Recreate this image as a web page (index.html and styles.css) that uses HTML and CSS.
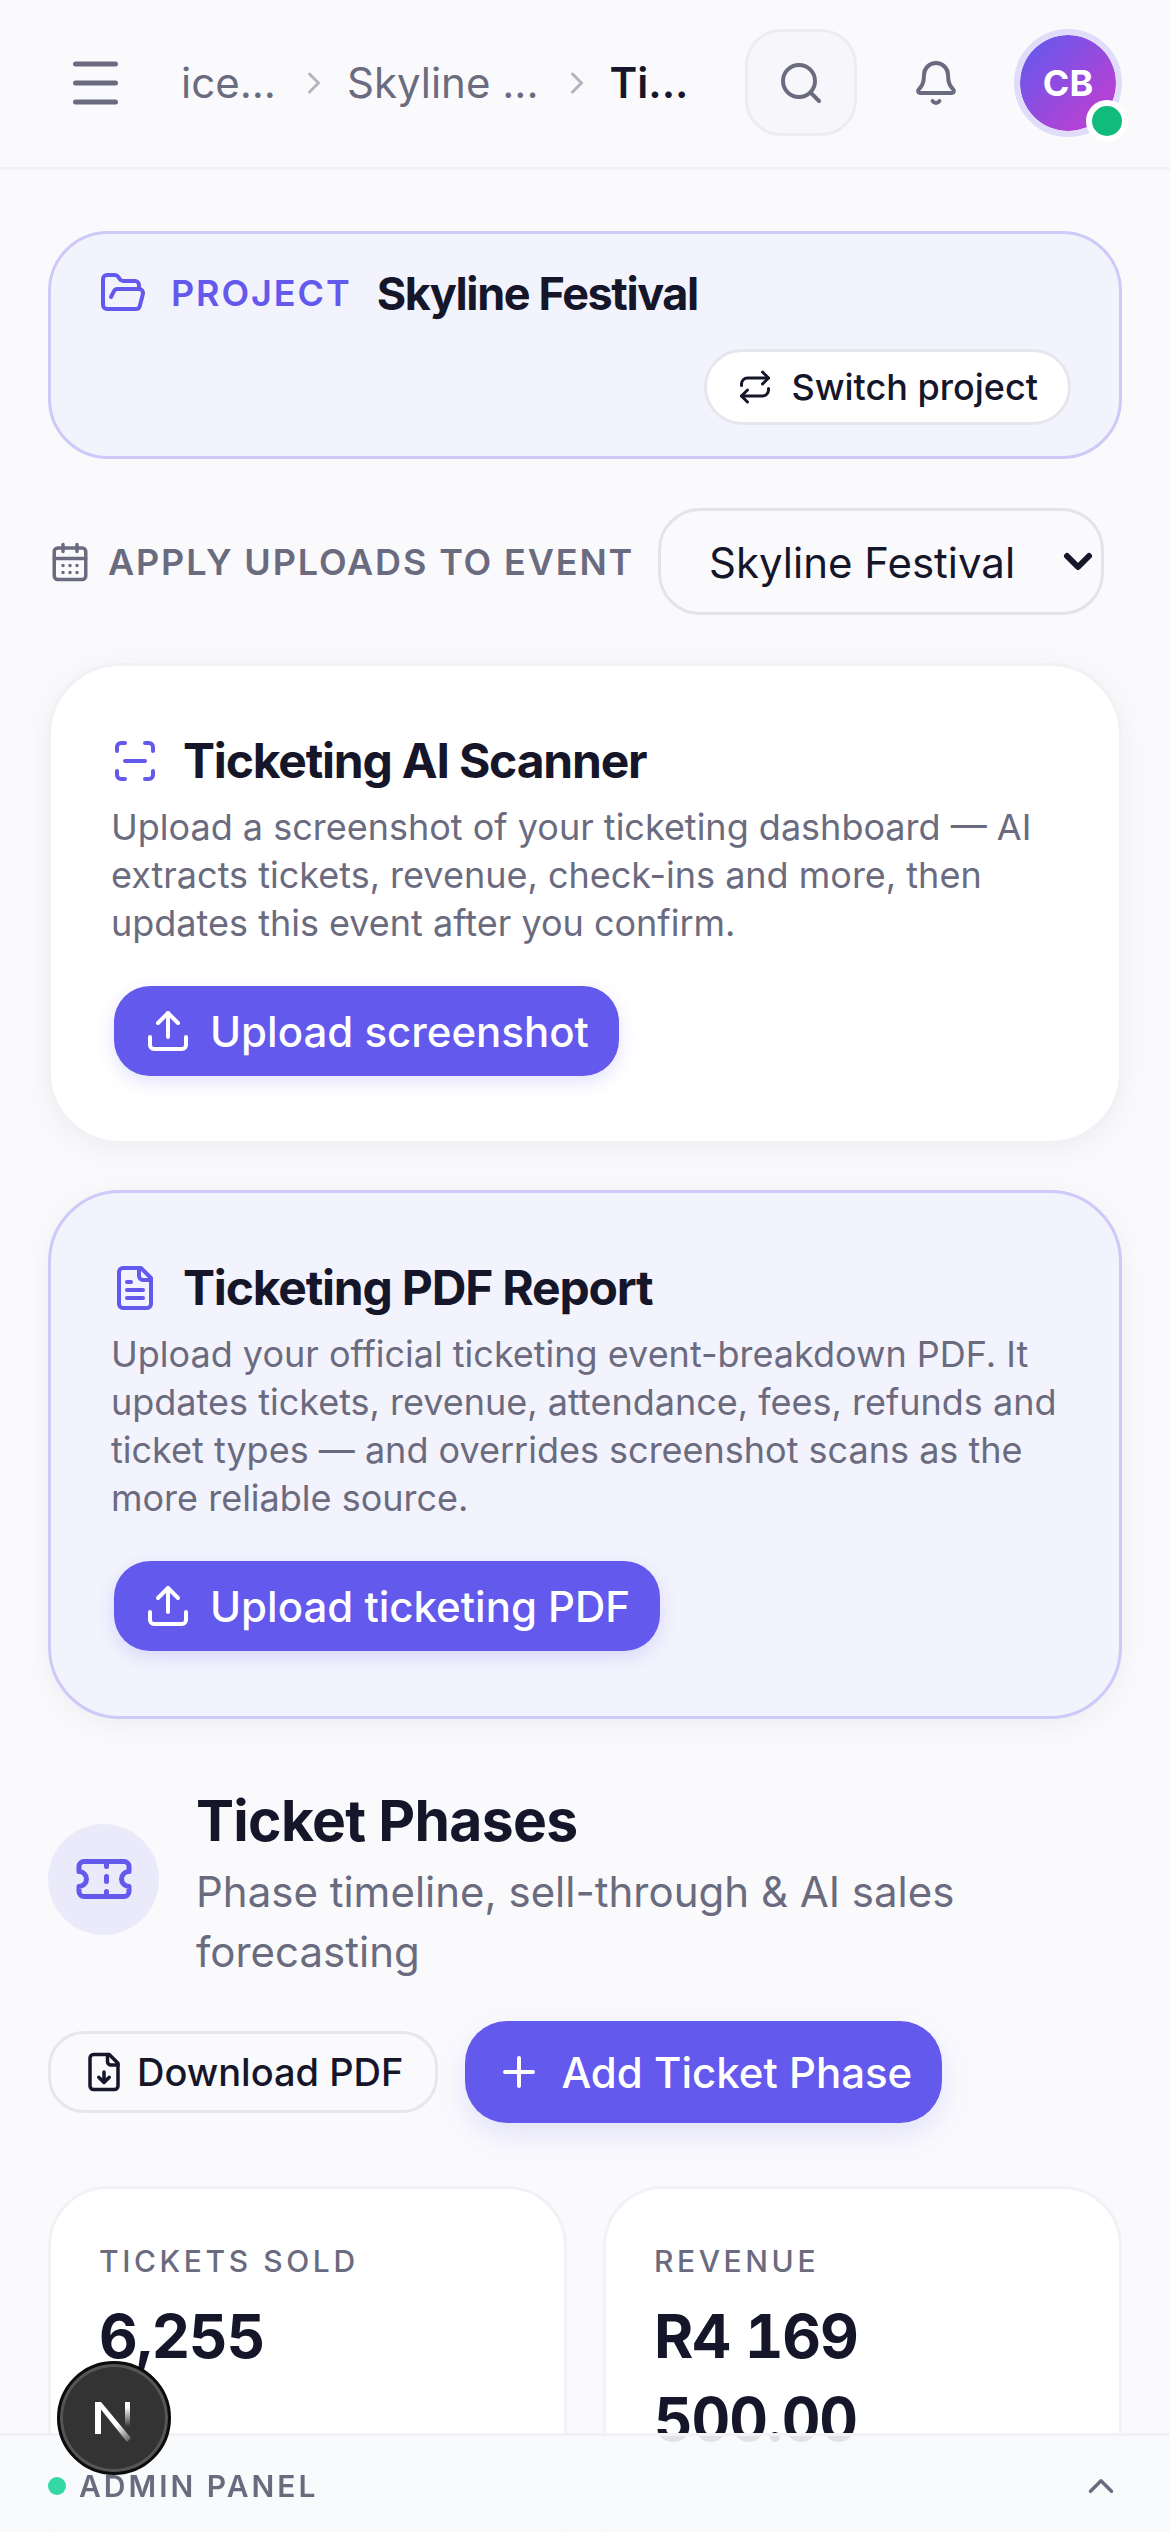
FILE: index.html
```html
<!DOCTYPE html>
<html lang="en">
<head>
    <meta charset="UTF-8">
    <meta name="viewport" content="width=device-width, initial-scale=1.0">
    <title>Ticket Phases</title>
    <link rel="stylesheet" href="styles.css">
</head>
<body>
    <header class="topbar">
        <button class="menu-btn" aria-label="Menu">
            <svg width="60" height="60" viewBox="0 0 60 60" fill="none" stroke="#6b6b80" stroke-width="5" stroke-linecap="round"><path d="M12.500 11h40M12.500 30h40M12.500 49h40"/></svg>
        </button>
        <nav class="crumbs">
            <span class="crumb">ice...</span>
            <svg class="crumb-sep" viewBox="0 0 24 24" fill="none" stroke="#b4b4c0" stroke-width="2" stroke-linecap="round" stroke-linejoin="round"><path d="m9 18 6-6-6-6"/></svg>
            <span class="crumb">Skyline ...</span>
            <svg class="crumb-sep" viewBox="0 0 24 24" fill="none" stroke="#b4b4c0" stroke-width="2" stroke-linecap="round" stroke-linejoin="round"><path d="m9 18 6-6-6-6"/></svg>
            <span class="crumb crumb-current">Ti...</span>
        </nav>
        <button class="search-btn" aria-label="Search">
            <svg width="48" height="48" viewBox="0 0 24 24" fill="none" stroke="#6b6b80" stroke-width="2" stroke-linecap="round" stroke-linejoin="round"><circle cx="11" cy="11" r="8"/><path d="m21 21-4.3-4.3"/></svg>
        </button>
        <button class="bell-btn" aria-label="Notifications">
            <svg width="48" height="48" viewBox="0 0 24 24" fill="none" stroke="#6b6b80" stroke-width="2" stroke-linecap="round" stroke-linejoin="round"><path d="M10.3 21a2 2 0 0 0 3.4 0"/><path d="M3.3 15.3A1 1 0 0 0 4 17h16a1 1 0 0 0 .7-1.7C19.4 14 18 12.500 18 8A6 6 0 0 0 6 8c0 4.500-1.400 6-2.700 7.300"/></svg>
        </button>
        <div class="avatar">
            <span>CB</span>
            <i class="avatar-dot"></i>
        </div>
    </header>

    <main class="page">
        <section class="project-card">
            <div class="project-row">
                <svg width="48" height="48" viewBox="0 0 24 24" fill="none" stroke="#6359ed" stroke-width="2" stroke-linecap="round" stroke-linejoin="round"><path d="m6 14 1.500-2.900A2 2 0 0 1 9.240 10H20a2 2 0 0 1 1.940 2.500l-1.540 6a2 2 0 0 1-1.950 1.500H4a2 2 0 0 1-2-2V5a2 2 0 0 1 2-2h3.900a2 2 0 0 1 1.690.9l.81 1.200a2 2 0 0 0 1.670.9H18a2 2 0 0 1 2 2v2"/></svg>
                <span class="project-label">PROJECT</span>
                <span class="project-name">Skyline Festival</span>
            </div>
            <div class="project-actions">
                <button class="switch-btn">
                    <svg width="36" height="36" viewBox="0 0 24 24" fill="none" stroke="#16162a" stroke-width="2" stroke-linecap="round" stroke-linejoin="round"><path d="m17 2 4 4-4 4"/><path d="M3 11v-1a4 4 0 0 1 4-4h14"/><path d="m7 22-4-4 4-4"/><path d="M21 13v1a4 4 0 0 1-4 4H3"/></svg>
                    Switch project
                </button>
            </div>
        </section>

        <div class="apply-row">
            <svg width="42" height="42" viewBox="0 0 24 24" fill="none" stroke="#6b6b80" stroke-width="2" stroke-linecap="round" stroke-linejoin="round"><path d="M8 2v4M16 2v4"/><rect x="3" y="4" width="18" height="18" rx="2"/><path d="M3 10h18M8 14h.01M12 14h.01M16 14h.01M8 18h.01M12 18h.01M16 18h.01"/></svg>
            <span class="apply-label">APPLY UPLOADS TO EVENT</span>
            <div class="select-wrap">
                <select class="event-select">
                    <option>Skyline Festival</option>
                </select>
                <svg class="select-arrow" width="32" height="20" viewBox="0 0 32 20" fill="none" stroke="#16162a" stroke-width="6" stroke-linecap="round" stroke-linejoin="round"><path d="m5 4 11 11L27 4"/></svg>
            </div>
        </div>

        <section class="card">
            <h3 class="card-title">
                <svg width="48" height="48" viewBox="0 0 24 24" fill="none" stroke="#6359ed" stroke-width="2" stroke-linecap="round" stroke-linejoin="round"><path d="M3 7V5a2 2 0 0 1 2-2h2M17 3h2a2 2 0 0 1 2 2v2M21 17v2a2 2 0 0 1-2 2h-2M7 21H5a2 2 0 0 1-2-2v-2M7 12h10"/></svg>
                Ticketing AI Scanner
            </h3>
            <p class="card-text">Upload a screenshot of your ticketing dashboard — AI extracts tickets, revenue, check-ins and more, then updates this event after you confirm.</p>
            <button class="primary-btn">
                <svg width="48" height="48" viewBox="0 0 24 24" fill="none" stroke="#fff" stroke-width="2" stroke-linecap="round" stroke-linejoin="round"><path d="M12 3v12"/><path d="m17 8-5-5-5 5"/><path d="M21 15v4a2 2 0 0 1-2 2H5a2 2 0 0 1-2-2v-4"/></svg>
                Upload screenshot
            </button>
        </section>

        <section class="card card-tinted">
            <h3 class="card-title">
                <svg width="48" height="48" viewBox="0 0 24 24" fill="none" stroke="#6359ed" stroke-width="2" stroke-linecap="round" stroke-linejoin="round"><path d="M15 2H6a2 2 0 0 0-2 2v16a2 2 0 0 0 2 2h12a2 2 0 0 0 2-2V7Z"/><path d="M14 2v4a2 2 0 0 0 2 2h4M10 9H8M16 13H8M16 17H8"/></svg>
                Ticketing PDF Report
            </h3>
            <p class="card-text">Upload your official ticketing event-breakdown PDF. It updates tickets, revenue, attendance, fees, refunds and ticket types — and overrides screenshot scans as the more reliable source.</p>
            <button class="primary-btn">
                <svg width="48" height="48" viewBox="0 0 24 24" fill="none" stroke="#fff" stroke-width="2" stroke-linecap="round" stroke-linejoin="round"><path d="M12 3v12"/><path d="m17 8-5-5-5 5"/><path d="M21 15v4a2 2 0 0 1-2 2H5a2 2 0 0 1-2-2v-4"/></svg>
                Upload ticketing PDF
            </button>
        </section>

        <section class="phases-head">
            <div class="phases-icon">
                <svg width="60" height="60" viewBox="0 0 24 24" fill="none" stroke="#6359ed" stroke-width="2" stroke-linecap="round" stroke-linejoin="round"><path d="M2 9a3 3 0 0 1 0 6v2a2 2 0 0 0 2 2h16a2 2 0 0 0 2-2v-2a3 3 0 0 1 0-6V7a2 2 0 0 0-2-2H4a2 2 0 0 0-2 2Z"/><path d="M13 5v2M13 11v2M13 17v2"/></svg>
            </div>
            <div>
                <h2 class="phases-title">Ticket Phases</h2>
                <p class="phases-sub">Phase timeline, sell-through &amp; AI sales forecasting</p>
            </div>
        </section>

        <div class="phases-actions">
            <button class="outline-btn">
                <svg width="42" height="42" viewBox="0 0 24 24" fill="none" stroke="#16162a" stroke-width="2" stroke-linecap="round" stroke-linejoin="round"><path d="M15 2H6a2 2 0 0 0-2 2v16a2 2 0 0 0 2 2h12a2 2 0 0 0 2-2V7Z"/><path d="M14 2v4a2 2 0 0 0 2 2h4M12 18v-6M9 15l3 3 3-3"/></svg>
                Download PDF
            </button>
            <button class="add-btn">
                <svg width="48" height="48" viewBox="0 0 24 24" fill="none" stroke="#fff" stroke-width="2" stroke-linecap="round" stroke-linejoin="round"><path d="M5 12h14M12 5v14"/></svg>
                Add Ticket Phase
            </button>
        </div>

        <div class="stats">
            <div class="stat">
                <div class="stat-label">TICKETS SOLD</div>
                <div class="stat-value">6,255</div>
            </div>
            <div class="stat">
                <div class="stat-label">REVENUE</div>
                <div class="stat-value">R4 169 500.00</div>
            </div>
        </div>
    </main>

    <footer class="admin-bar">
        <span class="admin-dot"></span>
        <span class="admin-label">ADMIN PANEL</span>
        <svg class="admin-chevron" width="42" height="42" viewBox="0 0 24 24" fill="none" stroke="#6b6b80" stroke-width="2" stroke-linecap="round" stroke-linejoin="round"><path d="m18 15-6-6-6 6"/></svg>
    </footer>

    <button class="next-badge" aria-label="Next.js dev tools">
        <svg width="54" height="54" viewBox="0 0 54 54" fill="none">
            <defs>
                <linearGradient id="nFade1" gradientUnits="userSpaceOnUse" x1="8" y1="11" x2="44" y2="51"><stop offset="0.6" stop-color="#fff"/><stop offset="1" stop-color="#fff" stop-opacity="0.15"/></linearGradient>
                <linearGradient id="nFade2" gradientUnits="userSpaceOnUse" x1="0" y1="11" x2="0" y2="36"><stop offset="0.2" stop-color="#fff"/><stop offset="1" stop-color="#fff" stop-opacity="0"/></linearGradient>
            </defs>
            <path d="M8 11h6v32H8z" fill="#fff"/>
            <path d="M8 11h6l30 36-4 4z" fill="url(#nFade1)"/>
            <rect x="38" y="11" width="5" height="25" fill="url(#nFade2)"/>
        </svg>
    </button>
</body>
</html>
```

FILE: styles.css
```css
* {
    box-sizing: border-box;
}
html, body {
    height: 2532px;
    overflow: hidden;
}
body {
    margin: 0;
    font-family: Inter, "Noto Sans", sans-serif;
    background-color: #fafafd;
    color: #16162a;
}
button {
    font-family: inherit;
    cursor: pointer;
}
svg {
    flex-shrink: 0;
}

/* top bar */
.topbar {
    height: 170px;
    display: flex;
    align-items: center;
    padding: 0 48px 2px 63px;
    border-bottom: 3px solid #f2f2f6;
}
.menu-btn, .bell-btn {
    background: none;
    border: 0;
    padding: 0;
    display: flex;
}
.crumbs {
    display: flex;
    align-items: center;
    margin-left: 58px;
    flex: 1;
    font-size: 42px;
    color: #6b6b80;
}
.crumb-sep {
    width: 36px;
    height: 36px;
    margin: 0 15px 0 20px;
}
.crumb-current {
    font-weight: 600;
    color: #16162a;
}
.search-btn {
    width: 112px;
    height: 107px;
    border: 3px solid #ececf1;
    border-radius: 36px;
    background: #f7f7fb;
    display: flex;
    align-items: center;
    justify-content: center;
    padding: 0;
}
.bell-btn {
    margin: 0 54px 0 55px;
}
.avatar {
    position: relative;
    width: 108px;
    height: 108px;
    border-radius: 50%;
    border: 6px solid #e0dcf9;
    background: linear-gradient(135deg, #6359ed 10%, #b043d6 72%) border-box;
    background-clip: padding-box;
    color: #fff;
    font-size: 36px;
    font-weight: 700;
    display: flex;
    align-items: center;
    justify-content: center;
}
.avatar-dot {
    position: absolute;
    right: -12px;
    bottom: -11px;
    width: 42px;
    height: 42px;
    border-radius: 50%;
    background: #10bb7c;
    border: 6px solid #fff;
}

/* main column, scrolled content is cut at the window edge */
.page {
    height: 2362px;
    overflow: hidden;
    padding: 61px 48px 0;
}
.project-card {
    height: 228px;
    border: 3px solid #cdc9f8;
    border-radius: 60px;
    background: #f3f3fd;
    padding: 23px 48px 0 48px;
}
.project-row {
    display: flex;
    align-items: center;
    height: 72px;
}
.project-label {
    margin-left: 24px;
    font-size: 36px;
    font-weight: 600;
    letter-spacing: 1.9px;
    color: #6359ed;
}
.project-name {
    margin-left: 25px;
    font-size: 45px;
    font-weight: 700;
    letter-spacing: -1.4px;
}
.project-actions {
    display: flex;
    justify-content: flex-end;
    margin-top: 20px;
}
.switch-btn {
    height: 76px;
    padding: 0 30px;
    display: flex;
    align-items: center;
    gap: 18px;
    background: #fff;
    border: 3px solid #e6e6ed;
    border-radius: 38px;
    font-size: 36px;
    font-weight: 500;
    color: #16162a;
}
.apply-row {
    display: flex;
    align-items: center;
    margin-top: 49px;
    padding: 0 18px 0 1px;
    height: 107px;
}
.apply-label {
    margin-left: 17px;
    font-size: 36px;
    font-weight: 600;
    letter-spacing: 1.85px;
    color: #6b6b80;
}
.select-wrap {
    position: relative;
    margin-left: auto;
}
.event-select {
    appearance: none;
    display: block;
    width: 446px;
    height: 107px;
    padding: 2px 0 0 48px;
    font-family: inherit;
    font-size: 42px;
    color: #16162a;
    background: transparent;
    border: 3px solid #e3e3ea;
    border-radius: 42px;
}
.select-arrow {
    position: absolute;
    right: 10px;
    top: 44px;
    pointer-events: none;
}

/* upload cards */
.card {
    margin-top: 48px;
    border: 3px solid #f1f1f6;
    border-radius: 72px;
    background: #fff;
    padding: 65px 60px 65px 60px;
    box-shadow: 0 6px 30px rgba(22, 22, 42, 0.05);
}
.card-tinted {
    margin-top: 46px;
    border-color: #cdc9f8;
    background: #f3f3fd;
}
.card-title {
    margin: 0;
    display: flex;
    align-items: center;
    gap: 24px;
    font-size: 48px;
    line-height: 60px;
    font-weight: 700;
    letter-spacing: -1.2px;
}
.card-text {
    margin: 12px 0 0;
    font-size: 36px;
    line-height: 48px;
    color: #6b6b80;
}
.primary-btn {
    margin: 39px 0 0 3px;
    height: 90px;
    padding: 0 30px;
    display: flex;
    align-items: center;
    gap: 18px;
    background: #6359ed;
    color: #fff;
    border: 0;
    border-radius: 36px;
    font-size: 42px;
    font-weight: 500;
    box-shadow: 0 6px 18px rgba(99, 89, 237, 0.18);
}

/* ticket phases */
.phases-head {
    display: flex;
    align-items: center;
    gap: 37px;
    margin: 66px 0 0;
}
.phases-icon {
    width: 111px;
    height: 111px;
    margin-bottom: 9px;
    border-radius: 50%;
    background: #ebeafb;
    display: flex;
    align-items: center;
    justify-content: center;
    flex-shrink: 0;
}
.phases-title {
    margin: 0 0 5px;
    font-size: 57px;
    line-height: 72px;
    font-weight: 700;
    letter-spacing: -0.7px;
}
.phases-sub {
    margin: 0;
    font-size: 42px;
    line-height: 60px;
    color: #6b6b80;
}
.phases-actions {
    display: flex;
    align-items: center;
    gap: 27px;
    margin: 39px 0 0;
}
.outline-btn {
    height: 82px;
    padding: 0 32px;
    display: flex;
    align-items: center;
    gap: 12px;
    border: 3px solid #e6e6ed;
    border-radius: 36px;
    font-size: 38px;
    font-weight: 500;
    color: #16162a;
    background: transparent;
}
.add-btn {
    height: 102px;
    padding: 0 30px;
    display: flex;
    align-items: center;
    gap: 18px;
    background: #6359ed;
    color: #fff;
    border: 0;
    border-radius: 42px;
    font-size: 42px;
    font-weight: 500;
    box-shadow: 0 12px 30px rgba(99, 89, 237, 0.15);
}
.stats {
    display: grid;
    grid-template-columns: 1fr 1fr;
    gap: 36px;
    margin: 63px 0 0;
}
.stat {
    height: 500px;
    border: 3px solid #f1f1f6;
    border-radius: 60px;
    background: #fff;
    padding: 54px 48px;
}
.stat-label {
    font-size: 30px;
    font-weight: 500;
    letter-spacing: 3.6px;
    color: #6b6b80;
}
.stat-value {
    margin-top: 16px;
    font-size: 60px;
    line-height: 83px;
    font-weight: 700;
    letter-spacing: -1.2px;
    font-variant-numeric: tabular-nums;
}

/* overlays */
.admin-bar {
    position: fixed;
    left: 0;
    right: 0;
    bottom: 0;
    height: 99px;
    display: flex;
    align-items: center;
    padding: 4px 48px 0 48px;
    background: rgba(248, 249, 252, 0.9);
    border-top: 3px solid #f1f1f6;
}
.admin-dot {
    width: 18px;
    height: 18px;
    border-radius: 50%;
    background: #34d8a3;
}
.admin-label {
    margin-left: 13px;
    font-size: 30px;
    font-weight: 600;
    letter-spacing: 3px;
    color: #6b6b80;
}
.admin-chevron {
    margin-left: auto;
}
.next-badge {
    position: fixed;
    left: 57px;
    top: 2361px;
    width: 114px;
    height: 114px;
    border-radius: 50%;
    background: #333;
    border: 3px solid #0c0c0c;
    box-shadow: inset 0 0 0 3px #555;
    display: flex;
    align-items: center;
    justify-content: center;
    padding: 0;
}
```
